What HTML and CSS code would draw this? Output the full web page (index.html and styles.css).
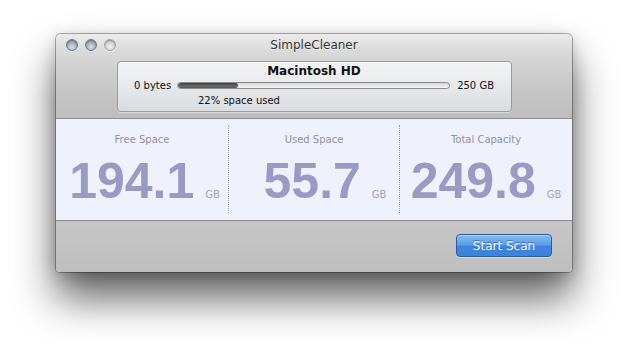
FILE: index.html
```html
<!DOCTYPE html>
<html>
<head>
<meta charset="utf-8">
<link rel="stylesheet" href="styles.css">
</head>
<body>
<div class="stage">
  <div class="window">
    <div class="chrome">
      <div class="titlebar">
        <div class="lights">
          <span class="light"></span>
          <span class="light"></span>
          <span class="light light-off"></span>
        </div>
        <div class="title">SimpleCleaner</div>
        <div></div>
      </div>
      <div class="toolbar">
        <div class="disk">
          <div class="disk-name">Macintosh HD</div>
          <div class="disk-row">
            <span class="disk-min">0 bytes</span>
            <div class="track"><div class="fill" style="width:22%"></div></div>
            <span class="disk-max">250 GB</span>
          </div>
          <div class="disk-used">22% space used</div>
        </div>
      </div>
    </div>
    <div class="stats">
      <div class="stat stat-first">
        <div class="stat-label">Free Space</div>
        <div class="stat-value"><span class="num">194.1</span><span class="unit">GB</span></div>
      </div>
      <div class="stat stat-mid">
        <div class="stat-label">Used Space</div>
        <div class="stat-value"><span class="num">55.7</span><span class="unit">GB</span></div>
      </div>
      <div class="stat">
        <div class="stat-label">Total Capacity</div>
        <div class="stat-value"><span class="num">249.8</span><span class="unit">GB</span></div>
      </div>
    </div>
    <div class="bottombar">
      <button class="btn">Start Scan</button>
    </div>
  </div>
</div>
</body>
</html>
```

FILE: styles.css
```css
html, body {
  margin: 0;
  padding: 0;
  background: #ffffff;
}
body {
  width: 628px;
  height: 350px;
  overflow: hidden;
  font-family: "DejaVu Sans", "Liberation Sans", sans-serif;
}
.stage {
  padding: 34px 0 0 56px;
}
.window {
  width: 516px;
  border-radius: 5px 5px 4px 4px;
  overflow: hidden;
  box-shadow: 0 0 0 1px rgba(0,0,0,0.3), 0 26px 42px rgba(0,0,0,0.62), 0 4px 16px rgba(0,0,0,0.2);
  display: flex;
  flex-direction: column;
}
.chrome {
  height: 84px;
  background: linear-gradient(to bottom, #ececec 0%, #dadada 20%, #c9c9c9 60%, #bdbdbd 100%);
  display: flex;
  flex-direction: column;
}
.titlebar {
  height: 22px;
  display: grid;
  grid-template-columns: 1fr auto 1fr;
  align-items: center;
}
.lights {
  display: flex;
  gap: 7px;
  padding-left: 10px;
}
.light {
  width: 12px;
  height: 12px;
  border-radius: 50%;
  box-sizing: border-box;
  border: 1px solid #6f7884;
  background: radial-gradient(circle at 50% 70%, #d9e2ea 0%, #a9b5c1 45%, #7d8a98 100%);
  box-shadow: inset 0 1px 1px rgba(0,0,0,0.25), 0 1px 0 rgba(255,255,255,0.6);
}
.light-off {
  border-color: #a2a2a2;
  background: radial-gradient(circle at 50% 70%, #f4f4f4 0%, #d4d4d4 50%, #b9b9b9 100%);
}
.title {
  font-size: 12px;
  line-height: 22px;
  color: #333;
  text-shadow: 0 1px 0 rgba(255,255,255,0.6);
}
.toolbar {
  padding: 5px 0 0 61px;
}
.disk {
  width: 395px;
  height: 51px;
  box-sizing: border-box;
  border: 1px solid #9a9a9a;
  border-radius: 4px;
  background: linear-gradient(to bottom, #f3f4f6 0%, #e7e9ec 50%, #d9dce1 100%);
  box-shadow: inset 0 1px 0 rgba(255,255,255,0.9), 0 1px 0 rgba(255,255,255,0.45);
  padding: 2px 17px 0 16px;
  display: flex;
  flex-direction: column;
}
.disk-name {
  font-size: 12px;
  font-weight: bold;
  line-height: 15px;
  text-align: center;
  color: #111;
}
.disk-row {
  display: flex;
  align-items: center;
  height: 13px;
  font-size: 10px;
  color: #111;
}
.disk-min { margin-right: 6px; }
.disk-max { margin-left: 7px; }
.track {
  flex: 1;
  height: 7px;
  box-sizing: border-box;
  border: 1px solid #8b8b8b;
  border-radius: 4px;
  background: linear-gradient(to bottom, #d6d6d6, #f6f6f6);
  overflow: hidden;
}
.fill {
  height: 100%;
  border-radius: 3px;
  background: linear-gradient(to bottom, #3d3d3d, #6a6a6a 60%, #555);
}
.disk-used {
  margin-top: 2px;
  padding-left: 64px;
  font-size: 10px;
  line-height: 13px;
  color: #111;
}
.stats {
  height: 101px;
  border-top: 1px solid #8e8e8e;
  border-bottom: 1px solid #8e8e8e;
  background: #eff1fc;
  display: grid;
  grid-template-columns: 172px 171px 1fr;
}
.stat {
  margin: 6px 0 7px;
  display: flex;
  flex-direction: column;
  align-items: center;
}
.stat + .stat {
  border-left: 1px dotted #9ea0ae;
}
.stat-label {
  margin-top: 8px;
  font-size: 10px;
  line-height: 13px;
  color: #9192a6;
}
.stat-value {
  margin-top: 10px;
  display: flex;
  align-items: baseline;
  gap: 11px;
}
.stat-first .stat-value {
  padding-left: 5px;
}
.stat-mid .stat-value {
  padding-left: 22px;
}
.num {
  font-family: "Liberation Sans", Arial, sans-serif;
  font-weight: bold;
  font-size: 50px;
  line-height: 50px;
  color: #9a9bc3;
}
.unit {
  font-size: 10px;
  color: #a3a4b8;
}
.bottombar {
  height: 51px;
  background: linear-gradient(to bottom, #c7c7c7 0%, #bebebe 100%);
  display: flex;
  justify-content: flex-end;
  align-items: flex-start;
  padding: 13px 20px 0 0;
  box-sizing: border-box;
}
.btn {
  width: 96px;
  height: 23px;
  border: 1px solid #2d5b9c;
  border-radius: 4px;
  background: linear-gradient(to bottom, #86bbf1 0%, #5c9fe6 45%, #3f86da 55%, #3b84dc 100%);
  box-shadow: inset 0 1px 0 rgba(255,255,255,0.35), 0 1px 0 rgba(255,255,255,0.4);
  color: #fff;
  font-family: "DejaVu Sans", sans-serif;
  font-size: 12px;
  padding: 0;
  text-shadow: 0 -1px 0 rgba(0,40,110,0.5);
}
```
